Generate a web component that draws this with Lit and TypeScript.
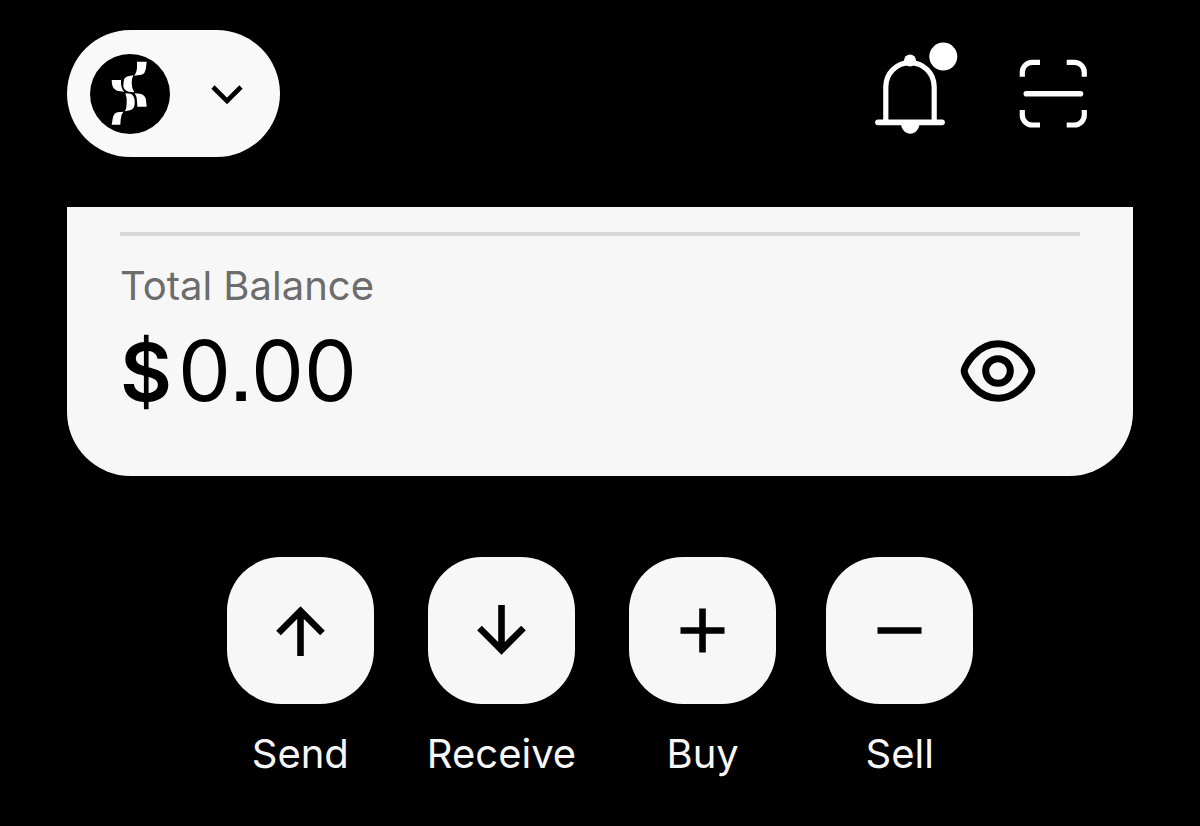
import { LitElement, html, css, svg } from 'lit'
import { customElement, property, state } from 'lit/decorators.js'

const icons = {
  send: svg`<path d="M25.5 51V6M3.5 28l22-22 22 22" />`,
  receive: svg`<path d="M25.5 0V45M3.5 23l22 22 22-22" />`,
  buy: svg`<path d="M25.5 3.5v44M3.5 25.5h44" />`,
  sell: svg`<path d="M3.5 25.5h44" />`,
}

type IconName = keyof typeof icons

@customElement('wallet-action')
export class WalletAction extends LitElement {
  static styles = css`
    :host {
      display: block;
    }
    .action {
      display: flex;
      flex-direction: column;
      align-items: center;
      gap: 26px;
      padding: 0;
      border: 0;
      background: none;
      color: #f7f7f7;
      font: 400 40px/48px Inter, sans-serif;
      cursor: pointer;
    }
    .tile {
      display: grid;
      place-items: center;
      width: 147px;
      height: 147px;
      border-radius: 54px;
      background: #f7f7f7;
    }
    .icon {
      width: 51px;
      height: 51px;
      fill: none;
      stroke: #000;
      stroke-width: 6.6;
    }
    .label {
      padding: 0 3px;
    }
  `

  @property() icon: IconName = 'send'
  @property() label = ''

  render() {
    return html`
      <button class="action">
        <span class="tile">
          <svg class="icon" viewBox="0 0 51 51" aria-hidden="true">${icons[this.icon]}</svg>
        </span>
        <span class="label">${this.label}</span>
      </button>
    `
  }
}

@customElement('app-root')
export class AppRoot extends LitElement {
  static styles = css`
    :host {
      display: block;
      box-sizing: border-box;
      min-height: 100vh;
      padding: 30px 67px 48px;
      background: #000;
      font-family: Inter, sans-serif;
    }
    button {
      padding: 0;
      border: 0;
      background: none;
      cursor: pointer;
    }
    svg {
      display: block;
    }
    .header {
      display: flex;
      align-items: center;
      justify-content: space-between;
      padding-right: 44px;
    }
    .account {
      display: flex;
      align-items: center;
      gap: 41px;
      padding: 24px 37px 23px 23px;
      border-radius: 64px;
      background: #f9f9f9;
    }
    .tools {
      display: flex;
      align-items: center;
      gap: 55px;
    }
    .line-icon {
      fill: none;
      stroke: #fff;
      stroke-width: 5.2;
    }
    .solid {
      fill: #fff;
      stroke: none;
    }
    .card {
      margin-top: 50px;
      padding: 25px 53px 57px;
      border-radius: 0 0 64px 64px;
      background: #f7f7f7;
    }
    .rule {
      height: 4px;
      margin: 0 0 26px;
      border: 0;
      background: #d9d9d9;
    }
    .caption {
      margin: 0;
      color: #6c6c6c;
      font-size: 40px;
      font-weight: 400;
      line-height: 48px;
    }
    .row {
      display: flex;
      align-items: center;
      justify-content: space-between;
      padding-top: 13px;
      padding-right: 44px;
    }
    .amount {
      display: flex;
      align-items: baseline;
      gap: 6px;
      margin: 0;
      color: #000;
      font-size: 84px;
      font-weight: 400;
      line-height: 96px;
      font-feature-settings: 'ss07';
    }
    .currency {
      font-size: 80px;
      font-weight: 600;
      line-height: 80px;
    }
    .eye {
      fill: none;
      stroke: #000;
      stroke-width: 7;
      stroke-linejoin: round;
    }
    .actions {
      display: flex;
      flex-wrap: wrap;
      justify-content: center;
      gap: 50px;
      margin-top: 81px;
    }
  `

  @state() concealed = false

  toggle() {
    this.concealed = !this.concealed
  }

  render() {
    return html`
      <header class="header">
        <button class="account" aria-label="Switch account">
          <svg width="80" height="80" viewBox="30 25 240 240" aria-hidden="true">
            <circle cx="150" cy="145" r="120" />
            <g fill="#fff">
              <path d="M171 48H200L198 66Q196 84 184 87L162 90Q170 82 171 66Z" />
              <path d="M131 108Q132 95 144 92L160 89Q155 99 155 112Q155 129 163 140L146 138Q131 134 130 122Z" />
              <path d="M95 103H123V114Q124 130 133 138L114 136Q99 131 96 116Z" />
              <path d="M136 143L152 144Q163 149 164 166V176Q162 191 150 194L135 197Q140 187 140 172Q141 154 136 143Z" />
              <path d="M164 143L180 144Q195 147 198 162L200 183H172L171 166Q170 151 164 143Z" />
              <path d="M130 198Q122 208 122 222L121 237H95L98 219Q101 203 112 200Z" />
            </g>
          </svg>
          <svg width="32" height="20" viewBox="0 0 32 20" fill="none" stroke="#000" stroke-width="4.6" aria-hidden="true">
            <path d="M2 3l14 14 14-14" />
          </svg>
        </button>
        <div class="tools">
          <button aria-label="Notifications">
            <svg class="line-icon" width="92" height="103" viewBox="0 0 92 103" aria-hidden="true">
              <path d="M15.8 80V44.8a24.2 24.2 0 0 1 48.4 0V80" />
              <path d="M8 80.3H72" stroke-width="5.8" stroke-linecap="round" />
              <circle class="solid" cx="40" cy="18.5" r="6" />
              <path class="solid" d="M31 81h18.5c0 6-4 10.7-9.2 10.7S31 87 31 81z" />
              <circle class="solid" cx="73.3" cy="14.6" r="14" />
            </svg>
          </button>
          <button aria-label="Scan code">
            <svg class="line-icon" width="72" height="72" viewBox="0 0 72 72" aria-hidden="true">
              <path d="M5.3 18.7V14.3a10 10 0 0 1 10-10H23M49.7 4.3h7.6a10 10 0 0 1 10 10v4.4M67.3 52v5a10 10 0 0 1-10 10H49.7M23 67H15.3a10 10 0 0 1-10-10V52" />
              <path d="M9.3 35.7H63.5" stroke-width="5.6" stroke-linecap="round" />
            </svg>
          </button>
        </div>
      </header>

      <section class="card">
        <hr class="rule" />
        <h2 class="caption">Total Balance</h2>
        <div class="row">
          <p class="amount">
            ${this.concealed ? '••••' : html`<span class="currency">$</span><span>0.00</span>`}
          </p>
          <button aria-label="Show or hide balance" @click=${this.toggle}>
            <svg class="eye" width="76" height="64" viewBox="0 0 76 64" aria-hidden="true">
              <path d="M4.2 32C4.2 27 17 4.8 38 4.8S71.8 27 71.8 32 59 59.2 38 59.2 4.2 37 4.2 32Z" />
              <circle cx="38" cy="32" r="12.3" />
            </svg>
          </button>
        </div>
      </section>

      <nav class="actions">
        <wallet-action icon="send" label="Send"></wallet-action>
        <wallet-action icon="receive" label="Receive"></wallet-action>
        <wallet-action icon="buy" label="Buy"></wallet-action>
        <wallet-action icon="sell" label="Sell"></wallet-action>
      </nav>
    `
  }
}

declare global {
  interface HTMLElementTagNameMap {
    'app-root': AppRoot
    'wallet-action': WalletAction
  }
}
